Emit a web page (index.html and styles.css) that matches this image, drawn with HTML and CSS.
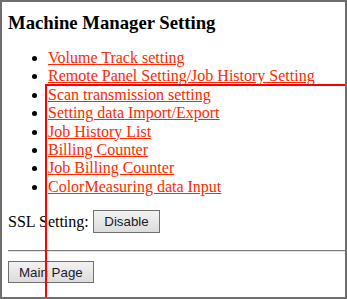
FILE: index.html
```html
<!DOCTYPE html>
<html>
<head>
<meta charset="utf-8">
<link rel="stylesheet" href="styles.css">
</head>
<body>
<div class="frame">
  <h1 class="title">Machine Manager Setting</h1>
  <ul class="menu">
    <li><a href="#">Volume Track setting</a></li>
    <li><a href="#">Remote Panel Setting/Job History Setting</a></li>
    <li><a href="#">Scan transmission setting</a></li>
    <li><a href="#">Setting data Import/Export</a></li>
    <li><a href="#">Job History List</a></li>
    <li><a href="#">Billing Counter</a></li>
    <li><a href="#">Job Billing Counter</a></li>
    <li><a href="#">ColorMeasuring data Input</a></li>
  </ul>
  <div class="ssl">SSL Setting: <button class="btn btn-wide">Disable</button></div>
  <hr class="rule">
  <button class="btn btn-main">Main Page</button>
  <div class="highlight"></div>
</div>
</body>
</html>
```

FILE: styles.css
```css
html, body {
  margin: 0;
  padding: 0;
  background: #ffffff;
}
body {
  font-family: "Liberation Serif", "Times New Roman", serif;
  font-size: 16px;
  color: #000;
}
.frame {
  position: relative;
  width: 347px;
  height: 299px;
  box-sizing: border-box;
  border: 2px solid #6e6e6e;
  padding: 6px 0 0 6px;
  overflow: hidden;
}
.title {
  font-size: 18.72px;
  font-weight: bold;
  margin: 4px 0 0 0;
  line-height: 22px;
}
.menu {
  margin: 15px 0 0 0;
  padding-left: 40px;
  line-height: 18.4px;
}
.menu a {
  color: #ff2a00;
  text-decoration: underline;
}
.ssl {
  margin-top: 14px;
  display: flex;
  align-items: center;
  gap: 4px;
  height: 23px;
}
.btn {
  font-family: "Liberation Sans", Arial, sans-serif;
  font-size: 13.33px;
  color: #1a1a2a;
  background: linear-gradient(#f2f2f2, #dcdcdc);
  border: 1px solid #707070;
  border-radius: 0;
  padding: 0 8px;
  height: 23px;
  margin: 0;
}
.btn-wide {
  padding: 0 10.5px;
}
.btn-main {
  height: 22px;
  padding: 0 10px;
}
.rule {
  margin: 17px 0 9px 0;
  border: 0;
  border-top: 1px solid #7a7a7a;
  border-bottom: 1px solid #e4e4e4;
  height: 0;
}
.highlight {
  position: absolute;
  left: 43px;
  top: 82px;
  width: 400px;
  height: 300px;
  border: 2px solid #ff0000;
}
```
